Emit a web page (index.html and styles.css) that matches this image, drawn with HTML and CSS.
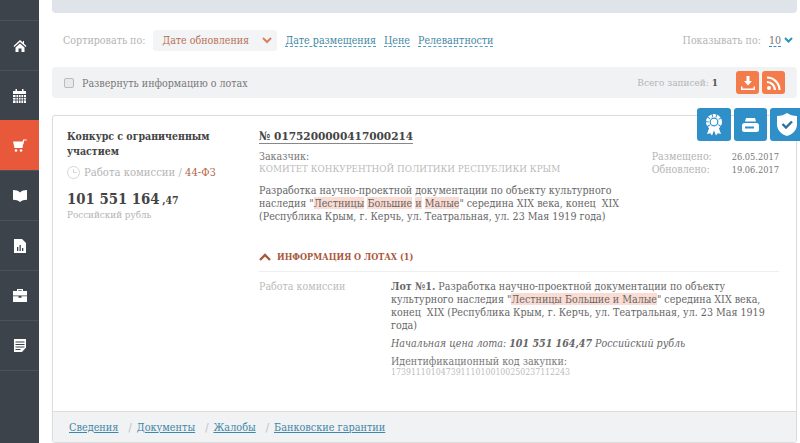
FILE: index.html
```html
<!DOCTYPE html>
<html lang="ru">
<head>
    <meta charset="UTF-8">
    <meta name="viewport" content="width=device-width, initial-scale=1.0">
    <title>Закупки</title>
    <link rel="stylesheet" href="styles.css">
</head>
<body>
    <nav class="sidebar">
        <a class="side-item"><svg width="14" height="14" viewBox="0 0 14 14"><path fill="#fff" d="M7 1 0.500 7l.8 1L7 3l5.700 5 .8-1-2.500-2.300V2H10v1.500zM2.500 8.500V13h3V9.500h3V13h3V8.500L7 4.500z"/></svg></a>
        <a class="side-item"><svg width="13" height="14" viewBox="0 0 13 14"><path fill="#fff" d="M0 2h2.500V0h1.500v2h5V0h1.500v2H13v3H0zM0 6h13v8H0z"/><path stroke="#3c434b" stroke-width=".8" d="M0 8.500h13M0 11h13M3 6v8M5.500 6v8M8 6v8M10.500 6v8"/></svg></a>
        <a class="side-item active"><svg width="14" height="13" viewBox="0 0 14 13"><path fill="#fff" d="M0 2.500h10.500L9.500 9H1.500z"/><path fill="none" stroke="#fff" stroke-width="1.200" d="M9.700 5l1-4h3"/><circle cx="3" cy="11.500" r="1.300" fill="#fff"/><circle cx="8" cy="11.500" r="1.300" fill="#fff"/></svg></a>
        <a class="side-item"><svg width="14" height="13" viewBox="0 0 14 13"><path fill="#fff" d="M0 1c2.800 0 5.300.7 7 2.500C8.700 1.700 11.200 1 14 1v9.800c-2.800 0-5.300.7-7 2.200-1.700-1.500-4.200-2.200-7-2.200z"/></svg></a>
        <a class="side-item"><svg width="12" height="14" viewBox="0 0 12 14"><path fill="#fff" fill-rule="evenodd" d="M0 0h8l4 4v10H0zM3 8v4h1.300V8zM5.500 6v6h1.300V6zM8 9v3h1.300V9z"/></svg></a>
        <a class="side-item"><svg width="14" height="13" viewBox="0 0 14 13"><path fill="#fff" fill-rule="evenodd" d="M4 2V0h6v2h4v4.500H0V2zM5.300 1.200V2h3.400v-.8zM0 7.300h5.500v1.500h3V7.300H14V13H0z"/></svg></a>
        <a class="side-item"><svg width="12" height="13" viewBox="0 0 12 13"><path fill="#fff" d="M0 0h12v8.500L8 13H0z"/><path stroke="#3c434b" d="M1.500 3h9M1.500 5.500h9M1.500 8h9M1.500 10.500h5"/></svg></a>
        <div class="side-rest"></div>
    </nav>

    <main class="content">
        <div class="top-strip"></div>

        <div class="sort-row">
            <span class="muted">Сортировать по:</span>
            <span class="sort-current">Дате обновления <svg width="10" height="7" viewBox="0 0 10 7"><path fill="none" stroke="#d9805a" stroke-width="2" d="M1 1l4 4 4-4"/></svg></span>
            <a class="sort-link">Дате размещения</a>
            <a class="sort-link">Цене</a>
            <a class="sort-link">Релевантности</a>
            <span class="per-page muted">Показывать по:</span>
            <a class="per-page-value">10</a>
            <svg width="9" height="6" viewBox="0 0 9 6"><path fill="none" stroke="#2f8fbd" stroke-width="2" d="M1 1l3.500 3.500L8 1"/></svg>
        </div>

        <div class="toolbar">
            <span class="check"></span>
            <span class="toolbar-label">Развернуть информацию о лотах</span>
            <span class="total muted">Всего записей: <b>1</b></span>
            <a class="tool-btn"><svg width="14" height="14" viewBox="0 0 14 14"><path fill="#fff" d="M5.500 0h3v5H11L7 9.500 3 5h2.500zM0 10.500h1.500v2h11v-2H14V14H0z"/></svg></a>
            <a class="tool-btn"><svg width="14" height="14" viewBox="0 0 14 14"><circle cx="2" cy="12" r="2" fill="#fff"/><path fill="none" stroke="#fff" stroke-width="2.200" d="M0 6c4.400 0 8 3.600 8 8M0 1.500c6.900 0 12.500 5.600 12.500 12.500"/></svg></a>
        </div>

        <article class="card">
            <div class="card-actions">
                <a class="action"><svg width="16" height="22" viewBox="0 0 16 22"><path fill="#fff" d="M3.500 13 1 20l3.200-.8L6 21.500l2-5 2 5 1.800-2.300 3.200.8-2.500-7z"/><circle cx="8" cy="8" r="6.500" fill="none" stroke="#fff" stroke-width="3" stroke-dasharray="3.200 .9"/><circle cx="8" cy="8" r="5.200" fill="#fff"/><circle cx="8" cy="8" r="4.400" fill="#2f8fc9"/><circle cx="8" cy="8" r="3.200" fill="#fff"/></svg></a>
                <a class="action"><svg width="17" height="14" viewBox="0 0 17 14"><path fill="#fff" fill-rule="evenodd" d="M4 0h9l1 3.500H3zM2.500 5h12A2.500 2.500 0 0 1 17 7.500v4a2.500 2.500 0 0 1-2.500 2.500h-12A2.500 2.500 0 0 1 0 11.500v-4A2.500 2.500 0 0 1 2.500 5zM3 8.500v2h9v-2z"/></svg></a>
                <a class="action"><svg width="20" height="23" viewBox="0 0 20 23"><path fill="#fff" d="M10 0c3 2 6 3 10 3v8c0 6-4 10-10 12C4 21 0 17 0 11V3c4 0 7-1 10-3z"/><path fill="none" stroke="#2f6f9c" stroke-width="2.400" d="M5.500 11l3.500 3.500 6-6"/></svg></a>
            </div>

            <div class="card-body">
                <div class="summary">
                    <h3>Конкурс с ограниченным участием</h3>
                    <div class="stage">
                        <svg width="13" height="13" viewBox="0 0 13 13"><circle cx="6.500" cy="6.500" r="6" fill="none" stroke="#d5d5d5"/><path fill="none" stroke="#d5d5d5" d="M6.500 3v3.500h3"/></svg>
                        <span>Работа комиссии / <span class="law">44-ФЗ</span></span>
                    </div>
                    <div class="price">101 551 164 <small>,47</small></div>
                    <div class="currency">Российский рубль</div>
                </div>

                <div class="details">
                    <a class="number">№ 0175200000417000214</a>
                    <div class="customer-row">
                        <div>
                            <div class="label">Заказчик:</div>
                            <div class="customer">КОМИТЕТ КОНКУРЕНТНОЙ ПОЛИТИКИ РЕСПУБЛИКИ КРЫМ</div>
                        </div>
                        <dl class="dates">
                            <dt>Размещено:</dt><dd>26.05.2017</dd>
                            <dt>Обновлено:</dt><dd>19.06.2017</dd>
                        </dl>
                    </div>
                    <p class="descr">Разработка научно-проектной документации по объекту культурного наследия "<mark>Лестницы</mark> <mark>Большие</mark> <mark>и</mark> <mark>Малые</mark>" середина XIX века, конец&nbsp; XIX (Республика Крым, г. Керчь, ул. Театральная, ул. 23 Мая 1919 года)</p>

                    <div class="lots-title"><svg width="12" height="8" viewBox="0 0 12 8"><path fill="none" stroke="#a9583c" stroke-width="2.400" d="M1 7l5-5 5 5"/></svg> ИНФОРМАЦИЯ О ЛОТАХ (1)</div>
                    <div class="lot">
                        <div class="lot-status">Работа комиссии</div>
                        <div class="lot-text">
                            <p><b>Лот №1.</b> Разработка научно-проектной документации по объекту культурного наследия "<mark>Лестницы Большие и Малые</mark>" середина XIX века, конец&nbsp; XIX (Республика Крым, г. Керчь, ул. Театральная, ул. 23 Мая 1919 года)</p>
                            <p class="lot-price">Начальная цена лота: <b>101 551 164,47</b> Российский рубль</p>
                            <div class="label">Идентификационный код закупки:</div>
                            <div class="code">173911101047391110100100250237112243</div>
                        </div>
                    </div>
                </div>
            </div>

            <div class="card-footer">
                <a>Сведения</a>
                <span>/</span><a>Документы</a>
                <span>/</span><a>Жалобы</a>
                <span>/</span><a>Банковские гарантии</a>
            </div>
        </article>
    </main>
</body>
</html>
```

FILE: styles.css
```css
* {
    margin: 0;
    padding: 0;
    box-sizing: border-box;
}

body {
    font-family: 'DejaVu Serif Condensed', 'DejaVu Serif', serif;
    font-size: 10.600px;
    color: #555;
    background: #fff;
    height: 443px;
    overflow: hidden;
    display: flex;
}

.sidebar {
    width: 39px;
    flex-shrink: 0;
    background: #3c434b;
    padding-top: 20px;
    display: flex;
    flex-direction: column;
}

.side-item {
    height: 50px;
    display: flex;
    align-items: center;
    justify-content: center;
    border-top: 1px solid #4b525a;
}

.side-item.active {
    background: #e8583a;
    border-top-color: #e8583a;
}

.side-rest {
    border-top: 1px solid #4b525a;
    flex: 1;
}

.content {
    flex: 1;
    padding-left: 13px;
    padding-right: 3px;
    min-width: 0;
}

.top-strip {
    height: 13px;
    background: #dfe3ea;
    border-radius: 0 0 4px 4px;
}

.sort-row {
    height: 54px;
    padding-left: 11px;
    display: flex;
    align-items: center;
}

.muted {
    color: #b4b4b4;
}

.sort-current {
    margin-left: 8px;
    height: 21px;
    width: 124px;
    padding-left: 9px;
    padding-right: 5px;
    background: #f3f4f6;
    border-radius: 3px;
    color: #b96f55;
    display: flex;
    align-items: center;
    justify-content: space-between;
}

.sort-link {
    margin-left: 8px;
    color: #3f87a6;
    border-bottom: 1px dashed #4f9dbd;
    line-height: 12px;
}

.per-page {
    margin-left: auto;
}

.per-page-value {
    margin-left: 8px;
    margin-right: 3px;
    color: #777;
    border-bottom: 1px dashed #2f8fbd;
    line-height: 12px;
}

.sort-row svg {
    flex-shrink: 0;
}

.sort-row > svg {
    margin-right: 4px;
}

.toolbar {
    height: 31px;
    background: #f1f2f4;
    border-radius: 4px;
    padding-left: 12px;
    padding-right: 12px;
    display: flex;
    align-items: center;
}

.check {
    width: 10px;
    height: 10px;
    border: 1px solid #bbb;
    border-radius: 2px;
    background: #e9e9e9;
}

.toolbar-label {
    margin-left: 8px;
    color: #777;
}

.total {
    margin-left: auto;
    margin-right: 15px;
    font-size: 10px;
}

.total b {
    color: #555;
}

.tool-btn {
    width: 23px;
    height: 23px;
    margin-left: 3px;
    background: #f47b4a;
    border-radius: 3px;
    display: flex;
    align-items: center;
    justify-content: center;
}

.card {
    position: relative;
    margin-top: 17px;
    height: 328px;
    border: 1px solid #dcdcdc;
    border-radius: 3px;
    box-shadow: 0 0 1px #ddd;
    display: flex;
    flex-direction: column;
}

.card-actions {
    position: absolute;
    right: -7px;
    top: -8px;
    display: flex;
    gap: 3px;
}

.action {
    width: 33px;
    height: 33px;
    background: #2f8fc9;
    border-radius: 3px;
    display: flex;
    align-items: center;
    justify-content: center;
}

.action:first-child {
    width: 34px;
}

.card-body {
    flex: 1;
    padding: 13px 17px 0 14px;
    display: flex;
}

.summary {
    width: 192px;
    flex-shrink: 0;
}

.summary h3 {
    font-size: 10.500px;
    line-height: 15px;
    color: #444;
    width: 160px;
}

.stage {
    margin-top: 7px;
    font-size: 11.200px;
    color: #b4b4b4;
    display: flex;
    align-items: center;
    gap: 4px;
    white-space: nowrap;
}

.law {
    color: #b5674c;
}

.price {
    margin-top: 10px;
    font-size: 14.800px;
    font-weight: bold;
    color: #444;
    line-height: 20px;
    white-space: nowrap;
}

.price small {
    margin-left: -2px;
    font-size: 10.500px;
}

.currency {
    color: #b4b4b4;
    font-size: 9.800px;
    line-height: 9px;
}

.details {
    flex: 1;
    min-width: 0;
}

.number {
    display: inline-block;
    font-size: 11.700px;
    font-weight: bold;
    color: #444;
    line-height: 14px;
    border-bottom: 1px solid #888;
}

.customer-row {
    margin-top: 6px;
    display: flex;
    justify-content: space-between;
}

.label {
    color: #777;
    line-height: 12px;
}

.customer {
    color: #bbb;
    font-size: 9.800px;
    line-height: 13px;
}

.dates {
    display: grid;
    grid-template-columns: 80px auto;
    line-height: 13px;
}

.dates dt {
    color: #b4b4b4;
}

.dates dd {
    color: #777;
    font-size: 9.200px;
}

.descr {
    margin-top: 8px;
    width: 372px;
    line-height: 13px;
    color: #666;
}

mark {
    background: #fbdcd2;
    color: #666;
}

.lots-title {
    margin-top: 29px;
    padding-bottom: 9px;
    font-size: 9px;
    font-weight: bold;
    color: #a9583c;
    border-bottom: 1px solid #eee;
    display: flex;
    align-items: center;
    gap: 6px;
}

.lot {
    margin-top: 8px;
    display: flex;
}

.lot-status {
    width: 132px;
    color: #bbb;
    flex-shrink: 0;
}

.lot-text {
    flex: 1;
    min-width: 0;
    padding-right: 6px;
    line-height: 13px;
    color: #666;
}

.lot-price {
    margin-top: 5px;
    margin-bottom: 5px;
    font-style: italic;
}

.code {
    color: #bbb;
    font-size: 8.700px;
    line-height: 10px;
}

.card-footer {
    height: 31px;
    background: #f1f2f4;
    border-top: 1px solid #dcdcdc;
    padding-left: 16px;
    display: flex;
    align-items: center;
    font-size: 10.800px;
}

.card-footer a {
    color: #3f87a6;
    text-decoration: underline;
}

.card-footer span {
    margin-left: 10px;
    margin-right: 5px;
    color: #bbb;
}
```
